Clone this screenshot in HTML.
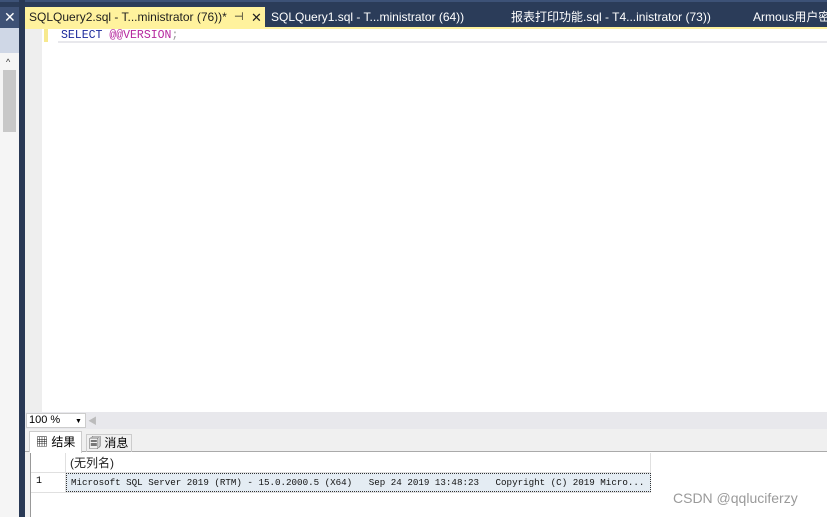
<!DOCTYPE html>
<html><head><meta charset="utf-8"><style>
*{margin:0;padding:0;box-sizing:border-box}
body{width:827px;height:517px;overflow:hidden;background:#fff;position:relative;font-family:"Liberation Sans","Noto Sans CJK SC",sans-serif}
.a{position:absolute}
.tab{position:absolute;top:7px;height:21px;font-size:12px;line-height:21px;color:#fff;white-space:nowrap}
.mono{font-family:"Liberation Mono","Noto Sans CJK SC",monospace}
</style></head><body>
<div class="a" style="left:0;top:0;width:827px;height:28px;background:#2b3c59"></div>
<div class="a" style="left:0;top:0;width:827px;height:2px;background:#3d5277"></div>
<div class="a" style="left:0;top:7px;width:19px;height:21px;background:#3e5175"></div>
<div class="a" style="left:4px;top:9px;color:#fff;font-size:14px">✕</div>
<div class="a" style="left:0;top:28px;width:19px;height:25px;background:#cfd7e6"></div>
<div class="a" style="left:0;top:53px;width:19px;height:464px;background:#f5f5f5"></div>
<div class="a" style="left:6px;top:57px;font-size:9px;color:#333">^</div>
<div class="a" style="left:3px;top:70px;width:13px;height:62px;background:#c8c8c8"></div>
<div class="a" style="left:19px;top:0;width:6px;height:517px;background:#293955"></div>
<div class="tab" style="left:25px;width:240px;background:#fff29d;color:#1e1e1e;padding-left:4px">SQLQuery2.sql - T...ministrator (76))*<span style="position:absolute;left:209px;font-size:11px">⊣</span><span style="position:absolute;left:226px;font-size:13px">✕</span></div>
<div class="tab" style="left:271px">SQLQuery1.sql - T...ministrator (64))</div>
<div class="tab" style="left:511px">报表打印功能.sql - T4...inistrator (73))</div>
<div class="tab" style="left:753px">Armous用户密</div>
<div class="a" style="left:25px;top:27px;width:802px;height:2px;background:#fff29d"></div>
<div class="a" style="left:25px;top:29px;width:17px;height:383px;background:#eeeeee"></div>
<div class="a" style="left:44px;top:29px;width:4px;height:13px;background:#f7e98e"></div>
<div class="a" style="left:58px;top:41px;width:769px;height:2px;background:#e8e8ec"></div>
<div class="a mono" style="left:61px;top:29px;font-size:11.5px;line-height:13px"><span style="color:#1c2a9c">SELECT</span> <span style="color:#b5279e">@@VERSION</span><span style="color:#999">;</span></div>
<div class="a" style="left:25px;top:412px;width:802px;height:17px;background:#e8e8ec"></div>
<div class="a" style="left:26px;top:413px;width:60px;height:15px;background:#fff;border:1px solid #ccc;font-size:11px;line-height:13px;padding-left:2px;color:#000">100 %<span style="position:absolute;left:48px;font-size:7px;top:1px">▼</span></div>
<div class="a" style="left:88px;top:414px;font-size:9px;color:#bbb">◀</div>
<div class="a" style="left:25px;top:429px;width:802px;height:23px;background:#f0f0f0;border-bottom:1px solid #aaa"></div>
<div class="a" style="left:29px;top:431px;width:53px;height:22px;background:#fff;border:1px solid #ccc;border-bottom:none;font-size:12px;line-height:20px;padding-left:6px">▦ 结果</div>
<div class="a" style="left:86px;top:434px;width:46px;height:18px;border:1px solid #ccc;border-bottom:none;font-size:12px;line-height:17px;padding-left:2px">🗐 消息</div>
<div class="a" style="left:25px;top:452px;width:5px;height:65px;background:#f0f0f0"></div>
<div class="a" style="left:30px;top:453px;width:1px;height:64px;background:#999"></div>
<div class="a" style="left:31px;top:453px;width:620px;height:20px;border-bottom:1px solid #e0e0e0;border-right:1px solid #e0e0e0"></div>
<div class="a" style="left:65px;top:453px;width:1px;height:40px;background:#e0e0e0"></div>
<div class="a" style="left:70px;top:454px;font-size:12px;color:#222">(无列名)</div>
<div class="a" style="left:31px;top:473px;width:620px;height:20px;border-bottom:1px solid #e0e0e0"></div>
<div class="a mono" style="left:36px;top:476px;font-size:10px">1</div>
<div class="a mono" style="left:66px;top:473px;width:585px;height:19px;background:#e4ecf3;border:1px dotted #333;font-size:9.2px;line-height:17px;padding-left:4px;white-space:nowrap;overflow:hidden;color:#111">Microsoft SQL Server 2019 (RTM) - 15.0.2000.5 (X64)&nbsp;&nbsp; Sep 24 2019 13:48:23&nbsp;&nbsp; Copyright (C) 2019 Micro...</div>
<div class="a" style="left:673px;top:490px;font-size:14px;color:#9a9a9a">CSDN @qqluciferzy</div>
</body></html>
